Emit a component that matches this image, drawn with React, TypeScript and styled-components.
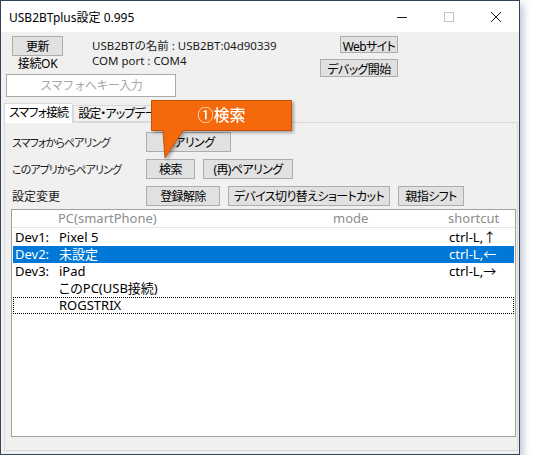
import React from "react";
import styled, { createGlobalStyle } from "styled-components";

const GlobalStyle = createGlobalStyle`
  body {
    margin: 0;
    background: #ffffff;
    font-family: "Noto Sans", "Noto Sans CJK JP", sans-serif;
    font-feature-settings: "palt";
  }
`;

type Device = {
  id: string;
  name: string;
  mode: string;
  shortcut: string;
  selected?: boolean;
  focused?: boolean;
};

const DEVICES: Device[] = [
  { id: "Dev1:", name: "Pixel 5", mode: "", shortcut: "ctrl-L,↑" },
  { id: "Dev2:", name: "未設定", mode: "", shortcut: "ctrl-L,←", selected: true },
  { id: "Dev3:", name: "iPad", mode: "", shortcut: "ctrl-L,→" },
  { id: "", name: "このPC(USB接続)", mode: "", shortcut: "" },
  { id: "", name: "ROGSTRIX", mode: "", shortcut: "", focused: true },
];

const App = () => {
  return (
    <>
      <GlobalStyle />
      <Window>
        <TitleBar>
          <Title>USB2BTplus設定 0.995</Title>
          <Controls>
            <Control>
              <svg width="10" height="10" viewBox="0 0 10 10">
                <path d="M0 5.5 H10" stroke="#1a1a1a" strokeWidth="1" />
              </svg>
            </Control>
            <Control>
              <svg width="10" height="10" viewBox="0 0 10 10">
                <rect x="0.5" y="0.5" width="9" height="9" fill="none" stroke="#c4c4c4" />
              </svg>
            </Control>
            <Control>
              <svg width="10" height="10" viewBox="0 0 10 10">
                <path d="M0 0 L10 10 M10 0 L0 10" stroke="#1a1a1a" strokeWidth="1" />
              </svg>
            </Control>
          </Controls>
        </TitleBar>

        <Body>
          <TopArea>
            <LeftBlock>
              <StatusRow>
                <StatusCol>
                  <Button $w={51} $h={20}>更新</Button>
                  <StatusText>接続OK</StatusText>
                </StatusCol>
                <Info>
                  <InfoLine>USB2BTの名前 : USB2BT:04d90339</InfoLine>
                  <InfoLine>COM port : COM4</InfoLine>
                </Info>
              </StatusRow>
              <KeyInput placeholder="スマフォへキー入力" />
            </LeftBlock>
            <RightCol>
              <Button $w={58} $h={17}>Webサイト</Button>
              <Button $w={78} $h={18}>デバッグ開始</Button>
            </RightCol>
          </TopArea>

          <TabStrip>
            <Tab $active>スマフォ接続</Tab>
            <Tab>設定・アップデート</Tab>
          </TabStrip>

          <Panel>
            <ActionRow>
              <RowLabel>スマフォからペアリング</RowLabel>
              <Button $w={85} $h={20}>ペアリング</Button>
            </ActionRow>
            <ActionRow>
              <RowLabel>このアプリからペアリング</RowLabel>
              <Button $w={49} $h={20}>検索</Button>
              <Button $w={90} $h={20}>(再)ペアリング</Button>
            </ActionRow>
            <ActionRow>
              <RowLabel $kanji>設定変更</RowLabel>
              <Button $w={74} $h={20}>登録解除</Button>
              <Button $w={162} $h={20}>デバイス切り替えショートカット</Button>
              <Button $w={66} $h={20}>親指シフト</Button>
            </ActionRow>

            <ListBox>
              <HeaderRow>
                <span />
                <span>PC(smartPhone)</span>
                <span>mode</span>
                <span>shortcut</span>
              </HeaderRow>
              <Rows>
                {DEVICES.map((d, i) => (
                  <DeviceRow key={i} $selected={d.selected} $focused={d.focused}>
                    <Cell>{d.id}</Cell>
                    <Cell>{d.name}</Cell>
                    <Cell>{d.mode}</Cell>
                    <Cell>{d.shortcut}</Cell>
                  </DeviceRow>
                ))}
              </Rows>
            </ListBox>
          </Panel>
        </Body>

        <Callout>
          <svg width="146" height="62" viewBox="0 0 146 62">
            <path
              d="M0.5 0.5 H140.5 V30.5 H32 L14 58 L12 30.5 H0.5 Z"
              fill="#f4690b"
              stroke="#c1520b"
              strokeWidth="1"
            />
          </svg>
          <CalloutText>①検索</CalloutText>
        </Callout>
      </Window>
    </>
  );
};

export default App;

const Window = styled.div`
  position: relative;
  box-sizing: border-box;
  width: 520px;
  height: 455px;
  border: 1px solid #33435a;
  background: #f0f0f0;
  display: flex;
  flex-direction: column;
  box-shadow: 3px 4px 8px rgba(70, 80, 130, 0.35);
  color: #000;
  font-size: 12px;
`;

const TitleBar = styled.div`
  height: 31px;
  background: #ffffff;
  display: flex;
  align-items: center;
`;

const Title = styled.div`
  padding-left: 8px;
  font-size: 12px;
  flex: 1;
`;

const Controls = styled.div`
  display: flex;
  height: 100%;
`;

const Control = styled.div`
  width: 47px;
  height: 100%;
  display: flex;
  align-items: center;
  justify-content: center;
`;

const Body = styled.div`
  flex: 1;
  display: flex;
  flex-direction: column;
`;

const TopArea = styled.div`
  display: flex;
  padding: 4px 121px 0 5px;
`;

const LeftBlock = styled.div`
  display: flex;
  flex-direction: column;
`;

const StatusRow = styled.div`
  display: flex;
  padding-left: 6px;
`;

const StatusCol = styled.div`
  width: 51px;
  display: flex;
  flex-direction: column;
  align-items: center;
`;

const StatusText = styled.div`
  line-height: 15px;
  white-space: nowrap;
  letter-spacing: -0.3px;
`;

const Info = styled.div`
  margin-left: 29px;
  padding-top: 2px;
`;

const InfoLine = styled.div`
  line-height: 15px;
  font-size: 11.5px;
  white-space: nowrap;
  color: #1a1a1a;
`;

const KeyInput = styled.input`
  box-sizing: border-box;
  margin-top: 3px;
  width: 170px;
  height: 23px;
  border: 1px solid #a9a9a9;
  background: #ffffff;
  font-family: inherit;
  font-size: 12px;
  letter-spacing: -0.6px;
  text-align: center;
  padding: 0;
  outline: none;
  &::placeholder {
    color: #a8a8a8;
  }
`;

const RightCol = styled.div`
  margin-left: auto;
  display: flex;
  flex-direction: column;
  align-items: flex-end;
  gap: 6px;
`;

const Button = styled.button<{ $w: number; $h: number }>`
  box-sizing: border-box;
  width: ${(p) => p.$w}px;
  height: ${(p) => p.$h}px;
  padding: 0;
  border: 1px solid #adadad;
  background: #e1e1e1;
  font-family: inherit;
  font-size: 12px;
  font-feature-settings: "palt";
  letter-spacing: -0.6px;
  color: #000;
  white-space: nowrap;
  flex-shrink: 0;
`;

const TabStrip = styled.div`
  display: flex;
  align-items: flex-end;
  margin-top: 6px;
  padding-left: 3px;
  height: 19px;
  position: relative;
  z-index: 1;
`;

const Tab = styled.div<{ $active?: boolean }>`
  box-sizing: border-box;
  height: ${(p) => (p.$active ? 20 : 17)}px;
  padding: 0 4px;
  line-height: ${(p) => (p.$active ? 18 : 16)}px;
  letter-spacing: -0.9px;
  border: 1px solid #d9d9d9;
  border-bottom: ${(p) => (p.$active ? "none" : "1px solid #d9d9d9")};
  background: ${(p) => (p.$active ? "#ffffff" : "#f0f0f0")};
  margin-bottom: ${(p) => (p.$active ? -1 : 0)}px;
  white-space: nowrap;
`;

const Panel = styled.div`
  flex: 1;
  margin: 0 1px 3px 3px;
  border: 1px solid #d9d9d9;
  background: #f0f0f0;
  padding: 9px 1px 0 6px;
  display: flex;
  flex-direction: column;
`;

const ActionRow = styled.div`
  display: flex;
  align-items: center;
  gap: 8px;
  height: 20px;
  margin-bottom: 7px;
  &:nth-of-type(3) {
    margin-bottom: 3px;
  }
`;

const RowLabel = styled.div<{ $kanji?: boolean }>`
  width: 126px;
  padding-left: 1px;
  font-size: ${(p) => (p.$kanji ? 12 : 11)}px;
  letter-spacing: ${(p) => (p.$kanji ? 0 : -0.9)}px;
  white-space: nowrap;
  color: #1a1a1a;
`;

const ListBox = styled.div`
  box-sizing: border-box;
  height: 228px;
  border: 1px solid #a0a0a0;
  background: #ffffff;
  font-size: 13px;
`;

const columns = "45px 275px 115px 1fr";

const HeaderRow = styled.div`
  display: grid;
  grid-template-columns: ${columns};
  height: 17px;
  line-height: 17px;
  padding: 0 1px;
  border-bottom: 1px solid #e5e5e5;
  color: #8c8c8c;
`;

const Rows = styled.div`
  padding: 1px 1px 0;
`;

const DeviceRow = styled.div<{ $selected?: boolean; $focused?: boolean }>`
  box-sizing: border-box;
  display: grid;
  grid-template-columns: ${columns};
  height: 17px;
  line-height: 15px;
  background: ${(p) => (p.$selected ? "#0078d7" : "transparent")};
  color: ${(p) => (p.$selected ? "#ffffff" : "#000000")};
  border: 1px ${(p) => (p.$focused ? "dotted #000" : "solid transparent")};
`;

const Cell = styled.span`
  white-space: nowrap;
  &:first-child {
    padding-left: 1px;
  }
`;

const Callout = styled.div`
  position: absolute;
  left: 150px;
  top: 99px;
  width: 146px;
  height: 62px;
  filter: drop-shadow(2px 2px 1.5px rgba(0, 0, 0, 0.3));
  z-index: 2;
  svg {
    display: block;
  }
`;

const CalloutText = styled.span`
  position: absolute;
  left: 0;
  top: 0;
  width: 141px;
  height: 31px;
  line-height: 31px;
  text-align: center;
  color: #ffffff;
  font-size: 16px;
  font-weight: 500;
`;
